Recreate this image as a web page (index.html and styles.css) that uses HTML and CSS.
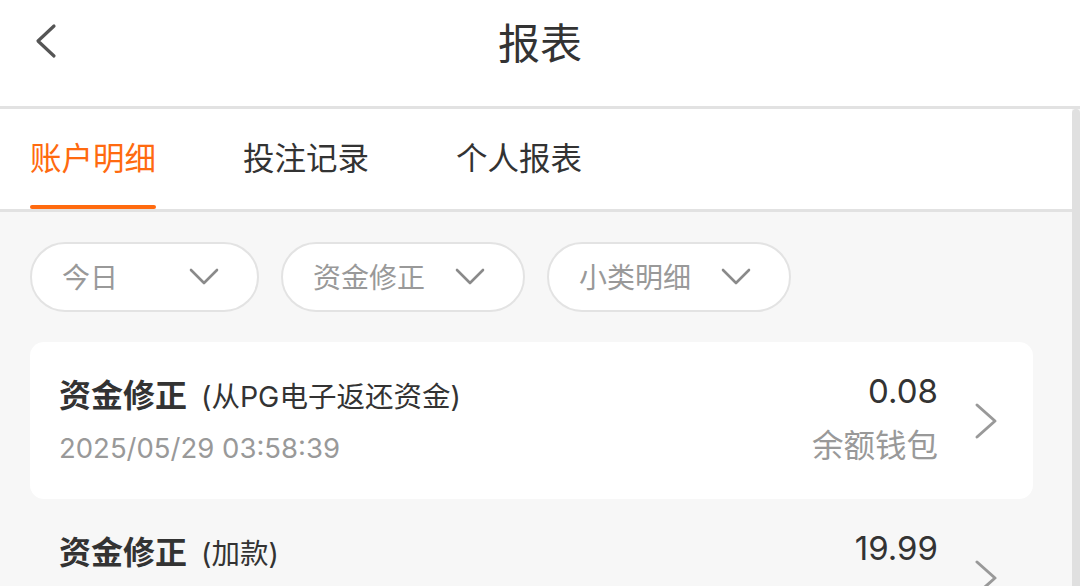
FILE: index.html
```html
<!DOCTYPE html>
<html lang="zh-CN">
<head>
<meta charset="utf-8">
<title>报表</title>
<link rel="stylesheet" href="styles.css">
</head>
<body>
<header class="topbar">
  <div class="topbar-left">
    <svg class="back-icon" width="24" height="36" viewBox="0 0 24 36"><polyline points="20,3 4,18 20,33" fill="none" stroke="#555" stroke-width="3.2" stroke-linecap="round" stroke-linejoin="round"/></svg>
  </div>
  <h1 class="topbar-title">报表</h1>
  <div class="topbar-right"></div>
</header>
<div class="page">
  <main class="main">
    <nav class="tabs">
      <div class="tab tab-active"><span class="tab-label">账户明细</span></div>
      <div class="tab"><span class="tab-label">投注记录</span></div>
      <div class="tab"><span class="tab-label">个人报表</span></div>
    </nav>
    <section class="filters">
      <div class="pill"><span class="pill-label">今日</span><svg class="pill-chev" width="30" height="18" viewBox="0 0 30 18"><polyline points="2,2 15,15 28,2" fill="none" stroke="#8a8a8a" stroke-width="2.6" stroke-linecap="round" stroke-linejoin="round"/></svg></div>
      <div class="pill"><span class="pill-label">资金修正</span><svg class="pill-chev" width="30" height="18" viewBox="0 0 30 18"><polyline points="2,2 15,15 28,2" fill="none" stroke="#8a8a8a" stroke-width="2.6" stroke-linecap="round" stroke-linejoin="round"/></svg></div>
      <div class="pill"><span class="pill-label">小类明细</span><svg class="pill-chev" width="30" height="18" viewBox="0 0 30 18"><polyline points="2,2 15,15 28,2" fill="none" stroke="#8a8a8a" stroke-width="2.6" stroke-linecap="round" stroke-linejoin="round"/></svg></div>
    </section>
    <ul class="records">
      <li class="record record-active">
        <div class="record-main">
          <div class="record-title"><strong class="record-type">资金修正</strong><span class="record-note">(从PG电子返还资金)</span></div>
          <div class="record-date">2025/05/29 03:58:39</div>
        </div>
        <div class="record-side">
          <div class="record-amount">0.08</div>
          <div class="record-wallet">余额钱包</div>
        </div>
        <svg class="record-chev" width="26" height="38" viewBox="0 0 26 38"><polyline points="4,3 22,19 4,35" fill="none" stroke="#999" stroke-width="3" stroke-linecap="round" stroke-linejoin="round"/></svg>
      </li>
      <li class="record">
        <div class="record-main">
          <div class="record-title"><strong class="record-type">资金修正</strong><span class="record-note">(加款)</span></div>
          <div class="record-date">2025/05/29 03:58:39</div>
        </div>
        <div class="record-side">
          <div class="record-amount">19.99</div>
          <div class="record-wallet">余额钱包</div>
        </div>
        <svg class="record-chev" width="26" height="38" viewBox="0 0 26 38"><polyline points="4,3 22,19 4,35" fill="none" stroke="#999" stroke-width="3" stroke-linecap="round" stroke-linejoin="round"/></svg>
      </li>
    </ul>
  </main>
  <div class="scrolltrack"></div>
</div>
</body>
</html>
```
FILE: styles.css
```css
* { box-sizing: border-box; }
html, body { margin: 0; padding: 0; }
body {
  width: 1080px;
  height: 586px;
  overflow: hidden;
  background: #f7f7f7;
  font-family: "Inter", "Noto Sans CJK SC", sans-serif;
  color: #333;
}
.topbar {
  height: 109px;
  background: #fff;
  border-bottom: 3px solid #e2e2e2;
  display: grid;
  grid-template-columns: 1fr auto 1fr;
  align-items: center;
  padding-bottom: 24px;
}
.topbar-left { padding-left: 34px; display: flex; align-items: center; }
.back-icon { display: block; }
.topbar-title {
  margin: 0;
  font-size: 42px;
  font-weight: 400;
  line-height: 50px;
  color: #333;
  font-family: "Noto Sans CJK SC", sans-serif;
}
.page { display: flex; height: 477px; }
.main { flex: 1; min-width: 0; }
.scrolltrack {
  width: 8px;
  background: #e0e0e0;
  border-radius: 4px 4px 0 0;
}
.tabs {
  display: flex;
  gap: 87px;
  padding-left: 30px;
  height: 103px;
  background: #fff;
  border-bottom: 3px solid #e2e2e2;
}
.tab {
  display: flex;
  flex-direction: column;
  height: 100px;
}
.tab-label {
  flex: 1;
  display: flex;
  align-items: center;
  font-family: "Noto Sans CJK SC", sans-serif;
  font-size: 31.5px;
  color: #333;
  padding-bottom: 2px;
}
.tab::after {
  content: "";
  display: block;
  height: 4px;
  border-radius: 2px;
  background: transparent;
}
.tab-active .tab-label { color: #ff6a0f; }
.tab-active::after { background: #ff6a0f; }
.filters {
  display: flex;
  gap: 22px;
  padding: 30px 30px 30px;
}
.pill {
  height: 70px;
  border: 2px solid #e3e3e3;
  border-radius: 35px;
  background: #fff;
  display: flex;
  align-items: center;
  gap: 30px;
  padding: 0 38px 0 30px;
}
.pill-label {
  min-width: 97px;
  font-family: "Noto Sans CJK SC", sans-serif;
  font-size: 28px;
  color: #999;
  padding-bottom: 2px;
}
.pill-chev { display: block; }
.records { list-style: none; margin: 0; padding: 0; }
.record {
  height: 157px;
  margin: 0 39px 0 30px;
  border-radius: 14px;
  display: flex;
  align-items: center;
  padding: 0 34px 0 29px;
}
.record-active { background: #fff; }
.record-main { flex: 1; min-width: 0; }
.record-title {
  display: flex;
  align-items: baseline;
  gap: 14px;
  line-height: 40px;
  margin-top: 0;
}
.record-type {
  font-family: "Noto Sans CJK SC", sans-serif;
  font-size: 32px;
  font-weight: 700;
  color: #333;
}
.record-note {
  font-size: 28.5px;
  color: #333;
}
.record-date {
  margin-top: 11px;
  line-height: 40px;
  font-size: 27.5px;
  color: #999;
}
.record-side { text-align: right; }
.record-amount {
  font-size: 33px;
  line-height: 40px;
  color: #333;
  margin-top: -8px;
}
.record-wallet {
  margin-top: 12px;
  line-height: 40px;
  font-family: "Noto Sans CJK SC", sans-serif;
  font-size: 31.5px;
  color: #999;
}
.record-chev { display: block; margin-left: 35px; }
```
